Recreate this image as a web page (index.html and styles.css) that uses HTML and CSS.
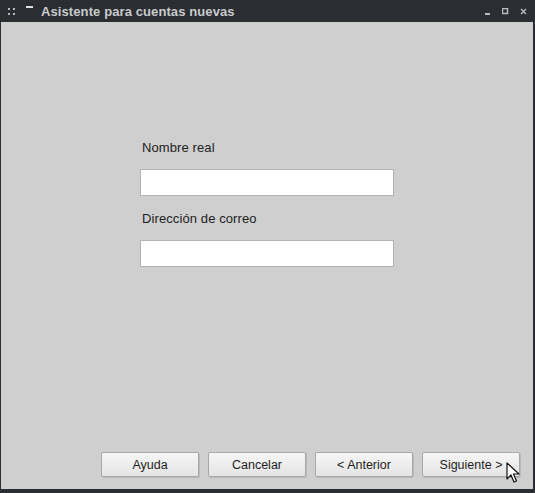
FILE: index.html
```html
<!DOCTYPE html>
<html lang="es">
<head>
<meta charset="UTF-8">
<title>Asistente para cuentas nuevas</title>
<link rel="stylesheet" href="styles.css">
</head>
<body>
  <div class="window">
    <div class="titlebar">
      <div class="title-left">
        <svg class="menu-icon" width="8" height="8" viewBox="0 0 8 8">
          <rect x="0" y="0" width="2" height="2" fill="#b8bbbf"/>
          <rect x="5" y="0" width="2" height="2" fill="#b8bbbf"/>
          <rect x="0" y="5" width="2" height="2" fill="#b8bbbf"/>
          <rect x="5" y="5" width="2" height="2" fill="#b8bbbf"/>
        </svg>
        <svg class="shade-icon" width="7" height="3" viewBox="0 0 7 3">
          <rect x="0" y="0" width="7" height="2" fill="#e0e0e0"/>
        </svg>
        <span class="title">Asistente para cuentas nuevas</span>
      </div>
      <div class="title-right">
        <svg width="7" height="7" viewBox="0 0 7 7">
          <rect x="1" y="5" width="5" height="2" fill="#b8bbbf"/>
        </svg>
        <svg width="7" height="7" viewBox="0 0 7 7">
          <rect x="0.5" y="0.5" width="5" height="5" fill="none" stroke="#b8bbbf" stroke-width="1.5"/>
        </svg>
        <svg width="7" height="7" viewBox="0 0 7 7">
          <path d="M1 1 L6 6 M6 1 L1 6" stroke="#b8bbbf" stroke-width="1.4"/>
        </svg>
      </div>
    </div>

    <div class="content">
      <div class="form">
        <label class="field-label">Nombre real</label>
        <input class="field" type="text">
        <label class="field-label">Dirección de correo</label>
        <input class="field" type="text">
      </div>

      <div class="buttons">
        <button class="btn">Ayuda</button>
        <button class="btn">Cancelar</button>
        <button class="btn">&lt; Anterior</button>
        <button class="btn">Siguiente &gt;</button>
        <!-- mouse pointer -->
        <svg class="pointer" width="14" height="22" viewBox="0 0 14 22">
          <path d="M1 1 L1 17 L5 13 L8 20 L10.5 19 L7.5 12 L13 12 Z" fill="#ffffff" stroke="#111" stroke-width="1.2" stroke-linejoin="round"/>
        </svg>
      </div>
    </div>
  </div>
</body>
</html>
```

FILE: styles.css
```css
body {
  margin: 0;
  padding: 0;
  background-color: #2a2d31;
  font-family: "Liberation Sans", Arial, sans-serif;
}

.window {
  width: 535px;
  height: 493px;
  display: flex;
  flex-direction: column;
  background-color: #2a2d31;
}

.titlebar {
  height: 22px;
  display: flex;
  justify-content: space-between;
  align-items: center;
  color: #c9cbcd;
}
.title-left {
  display: flex;
  align-items: center;
  padding-left: 8px;
}
.menu-icon {
  margin-top: 2px;
}
.shade-icon {
  margin-left: 10px;
  margin-bottom: 7px;
}
.title {
  margin-left: 8px;
  font-size: 13px;
  font-weight: bold;
  letter-spacing: 0.1px;
}
.title-right {
  display: flex;
  align-items: center;
  gap: 11px;
  padding-right: 8px;
}

.content {
  flex: 1;
  margin: 0 2px 4px 1px;
  background-color: #cfcfcf;
  display: flex;
  flex-direction: column;
}

.form {
  margin-top: 118px;
  margin-left: 139px;
  width: 254px;
  display: flex;
  flex-direction: column;
}
.field-label {
  font-size: 13px;
  color: #222;
  margin-left: 2px;
  height: 15px;
  line-height: 15px;
  letter-spacing: 0.1px;
}
.field {
  box-sizing: border-box;
  width: 254px;
  height: 27px;
  margin-top: 14px;
  margin-bottom: 15px;
  border: 1px solid #b2b2b2;
  background-color: #fff;
  outline: none;
}

.buttons {
  margin-top: auto;
  margin-bottom: 12px;
  margin-right: 13px;
  display: flex;
  justify-content: flex-end;
  gap: 9px;
  position: relative;
}
.btn {
  width: 98px;
  height: 25px;
  padding: 0;
  font-family: "Liberation Sans", Arial, sans-serif;
  font-size: 12.5px;
  color: #1e1e1e;
  border: 1px solid #a8a8a8;
  border-radius: 2px;
  background: linear-gradient(#f6f6f6, #e4e4e4);
  box-shadow: 1px 1px 0 #b9b9b9;
}
.pointer {
  position: absolute;
  right: 0;
  top: 10px;
}
```
